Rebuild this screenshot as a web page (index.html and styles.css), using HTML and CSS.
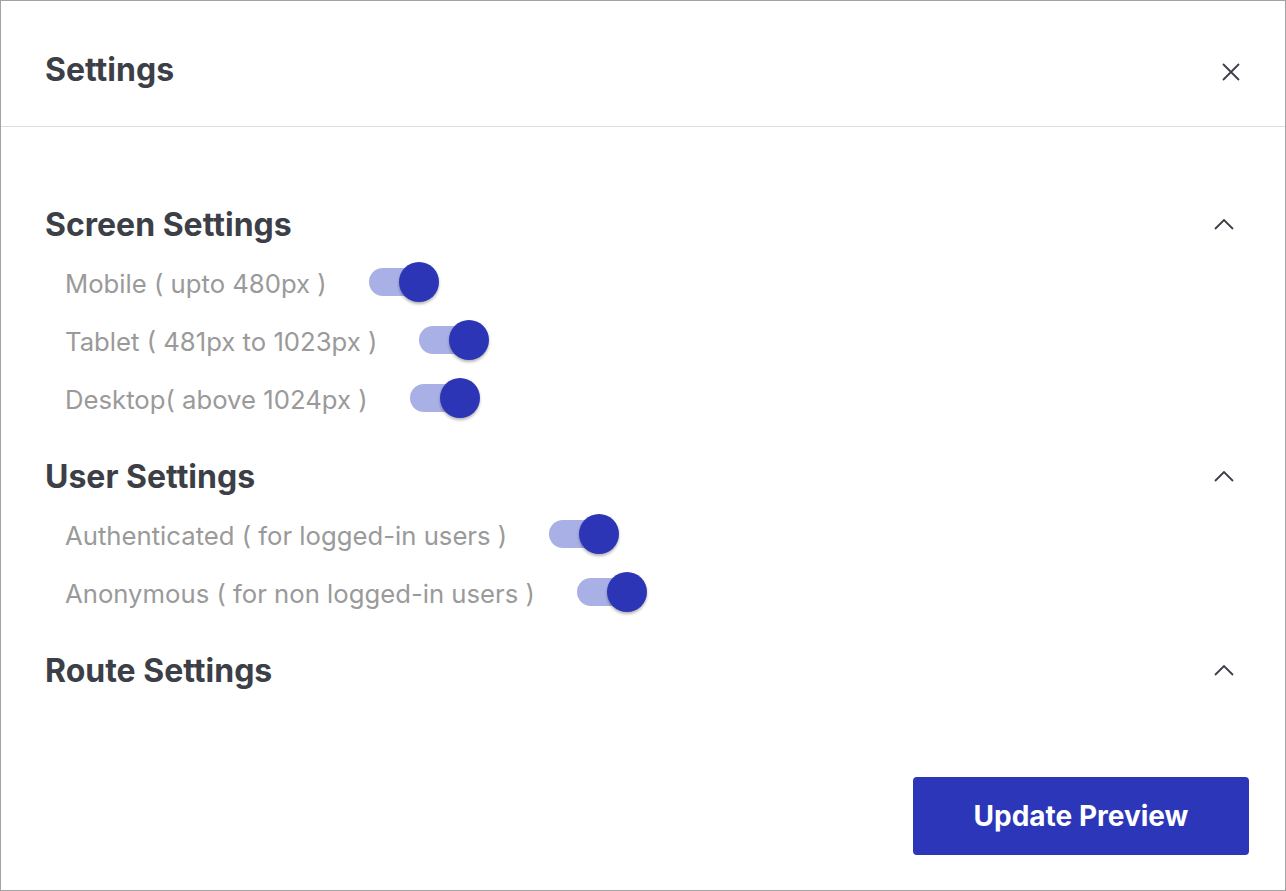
FILE: index.html
```html
<!DOCTYPE html>
<html>
<head lang="en">
    <meta charset="UTF-8">
    <title>Settings</title>
    <link rel="stylesheet" href="styles.css">
</head>
<body>
<div class="dialog">
    <div class="dialog-header">
        <h1>Settings</h1>
        <span class="close">
            <svg width="18" height="18" viewBox="0 0 18 18"><path d="M1 1 L17 17 M17 1 L1 17" stroke="#3c3f47" stroke-width="1.8" fill="none"/></svg>
        </span>
    </div>
    <div class="dialog-body">
        <!--屏幕设置-->
        <div class="section">
            <div class="section-title">
                <h2>Screen Settings</h2>
                <svg class="chevron" width="20" height="11" viewBox="0 0 20 11"><path d="M1 10 L10 1 L19 10" stroke="#3c3f47" stroke-width="1.8" fill="none"/></svg>
            </div>
            <div class="row"><span class="label">Mobile ( upto 480px )</span><span class="switch"></span></div>
            <div class="row"><span class="label">Tablet ( 481px to 1023px )</span><span class="switch"></span></div>
            <div class="row"><span class="label">Desktop( above 1024px )</span><span class="switch"></span></div>
        </div>
        <!--用户设置-->
        <div class="section">
            <div class="section-title">
                <h2>User Settings</h2>
                <svg class="chevron" width="20" height="11" viewBox="0 0 20 11"><path d="M1 10 L10 1 L19 10" stroke="#3c3f47" stroke-width="1.8" fill="none"/></svg>
            </div>
            <div class="row"><span class="label">Authenticated ( for logged-in users )</span><span class="switch"></span></div>
            <div class="row"><span class="label">Anonymous ( for non logged-in users )</span><span class="switch"></span></div>
        </div>
        <!--路由设置-->
        <div class="section">
            <div class="section-title">
                <h2>Route Settings</h2>
                <svg class="chevron" width="20" height="11" viewBox="0 0 20 11"><path d="M1 10 L10 1 L19 10" stroke="#3c3f47" stroke-width="1.8" fill="none"/></svg>
            </div>
        </div>
    </div>
    <div class="dialog-footer">
        <button class="btn">Update Preview</button>
    </div>
</div>
</body>
</html>
```
FILE: styles.css
```css
* {
    margin: 0;
    padding: 0;
    box-sizing: border-box;
}
body {
    background: #fff;
    font-family: Inter, "Noto Sans", sans-serif;
}
.dialog {
    width: 1286px;
    height: 891px;
    border: 1px solid #a3a3a3;
    display: flex;
    flex-direction: column;
}
/*头部*/
.dialog-header {
    height: 126px;
    padding: 13px 45px 0 44px;
    border-bottom: 1px solid #dcdcdc;
    display: flex;
    align-items: center;
    justify-content: space-between;
}
.dialog-header h1 {
    font-size: 32px;
    font-weight: 700;
    color: #3c3f47;
    line-height: 40px;
}
.close {
    display: flex;
    margin-top: 3px;
}
/*内容*/
.dialog-body {
    padding: 77px 45px 0 44px;
}
.section + .section {
    margin-top: 28px;
}
.section-title {
    height: 40px;
    display: flex;
    align-items: center;
    justify-content: space-between;
    margin-bottom: 10px;
}
.section-title h2 {
    font-size: 32px;
    font-weight: 700;
    color: #3c3f47;
}
.chevron {
    margin-right: 6px;
}
.row {
    height: 58px;
    padding-left: 20px;
    display: flex;
    align-items: center;
    gap: 42px;
}
.label {
    font-size: 25.7px;
    color: #9a9a9a;
}
.switch {
    position: relative;
    width: 64px;
    height: 28px;
    margin-top: -3px;
    border-radius: 14px;
    background: #a8b0e6;
}
.switch::after {
    content: "";
    position: absolute;
    left: 30px;
    top: -6px;
    width: 40px;
    height: 40px;
    border-radius: 50%;
    background: #2c35b6;
    box-shadow: 0 2px 3px rgba(0, 0, 0, 0.3);
}
/*底部*/
.dialog-footer {
    margin-top: auto;
    padding: 0 36px 35px 0;
    display: flex;
    justify-content: flex-end;
}
.btn {
    width: 336px;
    height: 78px;
    border: none;
    border-radius: 4px;
    background: #2c36b8;
    color: #fff;
    font-family: Inter, "Noto Sans", sans-serif;
    font-size: 28px;
    font-weight: 700;
    cursor: pointer;
}
```
